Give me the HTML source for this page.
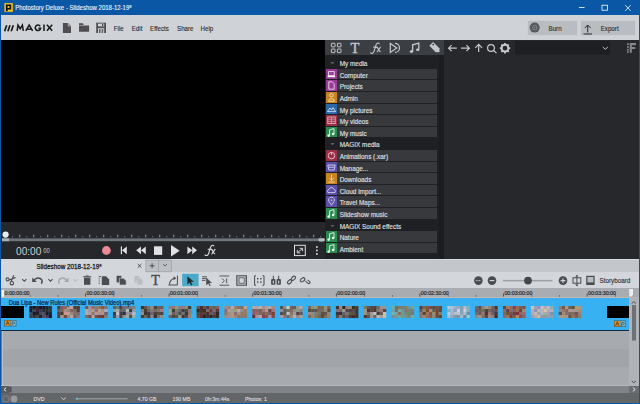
<!DOCTYPE html>
<html><head><meta charset="utf-8">
<style>
*{margin:0;padding:0;box-sizing:border-box}
html,body{width:640px;height:404px;overflow:hidden;background:#0957a5;font-family:"Liberation Sans",sans-serif}
.a{position:absolute}
svg{position:absolute;left:0;top:0}
text{font-family:"Liberation Sans",sans-serif}
.serif{font-family:"Liberation Serif",serif}
</style></head><body>
<div class="a" style="left:0px;top:0px;width:640px;height:15px;background:#0957a5;"></div>
<div class="a" style="left:1px;top:15px;width:638px;height:25px;background:#cfd3d8;"></div>
<div class="a" style="left:1px;top:40px;width:324px;height:182px;background:#000;"></div>
<div class="a" style="left:1px;top:222px;width:324px;height:37px;background:#25272b;"></div>
<div class="a" style="left:325px;top:40px;width:119px;height:15.5px;background:#3b3e43;"></div>
<div class="a" style="left:325px;top:55px;width:118px;height:204px;background:#1e2023;"></div>
<div class="a" style="left:439px;top:55px;width:5px;height:204px;background:#1b1c1f;"></div>
<div class="a" style="left:444px;top:40px;width:195px;height:219px;background:#26282c;"></div>
<div class="a" style="left:1px;top:259px;width:638px;height:13px;background:#c3c6ca;"></div>
<div class="a" style="left:1px;top:259px;width:638px;height:1px;background:#d6d9dd;"></div>
<div class="a" style="left:1px;top:259px;width:145px;height:13px;background:#d3d6da;"></div>
<div class="a" style="left:1px;top:272px;width:638px;height:16px;background:#d3d6da;"></div>
<div class="a" style="left:1px;top:288px;width:628px;height:9px;background:#a9acb0;"></div>
<div class="a" style="left:1px;top:297px;width:628px;height:1px;background:#c9b9ad;"></div>
<div class="a" style="left:1px;top:298px;width:628px;height:32px;background:#37b1f2;"></div>
<div class="a" style="left:1px;top:330px;width:628px;height:1px;background:#0d2a3a;"></div>
<div class="a" style="left:1px;top:331px;width:628px;height:55px;background:#a7aaae;"></div>
<div class="a" style="left:1px;top:349px;width:628px;height:18px;background:#a1a4a8;"></div>
<div class="a" style="left:629px;top:288px;width:10px;height:98px;background:#a9acb0;"></div>
<div class="a" style="left:1px;top:331px;width:1px;height:55px;background:#707a86;"></div>
<div class="a" style="left:2px;top:331px;width:1px;height:55px;background:#bec1c5;"></div>
<div class="a" style="left:629px;top:297px;width:10px;height:89px;background:#b0b3b7;"></div>
<div class="a" style="left:1px;top:386px;width:638px;height:7px;background:#8a8d91;"></div>
<div class="a" style="left:1px;top:393px;width:638px;height:10px;background:#636669;"></div>
<div class="a" style="left:326px;top:69px;width:11px;height:10px;background:#9a3c96;"></div>
<div class="a" style="left:337px;top:69px;width:100px;height:10px;background:#37393d;"></div>
<div class="a" style="left:326px;top:80px;width:11px;height:11px;background:#9a3c96;"></div>
<div class="a" style="left:337px;top:80px;width:100px;height:11px;background:#37393d;"></div>
<div class="a" style="left:326px;top:92px;width:11px;height:11px;background:#c88420;"></div>
<div class="a" style="left:337px;top:92px;width:100px;height:11px;background:#37393d;"></div>
<div class="a" style="left:326px;top:104px;width:11px;height:10px;background:#2c68a8;"></div>
<div class="a" style="left:337px;top:104px;width:100px;height:10px;background:#37393d;"></div>
<div class="a" style="left:326px;top:115px;width:11px;height:11px;background:#9a3048;"></div>
<div class="a" style="left:337px;top:115px;width:100px;height:11px;background:#37393d;"></div>
<div class="a" style="left:326px;top:127px;width:11px;height:10px;background:#2c8c50;"></div>
<div class="a" style="left:337px;top:127px;width:100px;height:10px;background:#37393d;"></div>
<div class="a" style="left:326px;top:150px;width:11px;height:11px;background:#9a3048;"></div>
<div class="a" style="left:337px;top:150px;width:100px;height:11px;background:#37393d;"></div>
<div class="a" style="left:326px;top:162px;width:11px;height:10px;background:#5a50a8;"></div>
<div class="a" style="left:337px;top:162px;width:100px;height:10px;background:#37393d;"></div>
<div class="a" style="left:326px;top:173px;width:11px;height:11px;background:#c88420;"></div>
<div class="a" style="left:337px;top:173px;width:100px;height:11px;background:#37393d;"></div>
<div class="a" style="left:326px;top:185px;width:11px;height:10px;background:#5a50a8;"></div>
<div class="a" style="left:337px;top:185px;width:100px;height:10px;background:#37393d;"></div>
<div class="a" style="left:326px;top:196px;width:11px;height:11px;background:#5a50a8;"></div>
<div class="a" style="left:337px;top:196px;width:100px;height:11px;background:#37393d;"></div>
<div class="a" style="left:326px;top:208px;width:11px;height:11px;background:#2c8c50;"></div>
<div class="a" style="left:337px;top:208px;width:100px;height:11px;background:#37393d;"></div>
<div class="a" style="left:326px;top:231px;width:11px;height:11px;background:#2c8c50;"></div>
<div class="a" style="left:337px;top:231px;width:100px;height:11px;background:#37393d;"></div>
<div class="a" style="left:326px;top:243px;width:11px;height:10px;background:#2c8c50;"></div>
<div class="a" style="left:337px;top:243px;width:100px;height:10px;background:#37393d;"></div>
<div class="a" style="left:1.25px;top:306px;width:22.5px;height:12px;background:#000;"></div>
<div class="a" style="left:607px;top:306px;width:21.5px;height:12px;background:#000;"></div>
<svg width="640" height="404" viewBox="0 0 640 404">
<g><rect x="29.40" y="306" width="3.26" height="3.05" fill="#181c2c"/><rect x="32.61" y="306" width="3.26" height="3.05" fill="#251323"/><rect x="35.83" y="306" width="3.26" height="3.05" fill="#38272c"/><rect x="39.04" y="306" width="3.26" height="3.05" fill="#21121f"/><rect x="42.26" y="306" width="3.26" height="3.05" fill="#21112a"/><rect x="45.47" y="306" width="3.26" height="3.05" fill="#1b242c"/><rect x="48.69" y="306" width="3.26" height="3.05" fill="#29333d"/><rect x="29.40" y="309" width="3.26" height="3.05" fill="#1e142c"/><rect x="32.61" y="309" width="3.26" height="3.05" fill="#494346"/><rect x="35.83" y="309" width="3.26" height="3.05" fill="#362738"/><rect x="39.04" y="309" width="3.26" height="3.05" fill="#413650"/><rect x="42.26" y="309" width="3.26" height="3.05" fill="#2d2b2d"/><rect x="45.47" y="309" width="3.26" height="3.05" fill="#263029"/><rect x="48.69" y="309" width="3.26" height="3.05" fill="#3a353b"/><rect x="29.40" y="312" width="3.26" height="3.05" fill="#474249"/><rect x="32.61" y="312" width="3.26" height="3.05" fill="#1b151f"/><rect x="35.83" y="312" width="3.26" height="3.05" fill="#1d2027"/><rect x="39.04" y="312" width="3.26" height="3.05" fill="#4f4156"/><rect x="42.26" y="312" width="3.26" height="3.05" fill="#4e5059"/><rect x="45.47" y="312" width="3.26" height="3.05" fill="#1e1427"/><rect x="48.69" y="312" width="3.26" height="3.05" fill="#1b262f"/><rect x="29.40" y="315" width="3.26" height="3.05" fill="#443b47"/><rect x="32.61" y="315" width="3.26" height="3.05" fill="#3b302e"/><rect x="35.83" y="315" width="3.26" height="3.05" fill="#464442"/><rect x="39.04" y="315" width="3.26" height="3.05" fill="#1d242a"/><rect x="42.26" y="315" width="3.26" height="3.05" fill="#5a4a59"/><rect x="45.47" y="315" width="3.26" height="3.05" fill="#4d3952"/><rect x="48.69" y="315" width="3.26" height="3.05" fill="#271327"/><rect x="57.26" y="306" width="3.26" height="3.05" fill="#59342f"/><rect x="60.47" y="306" width="3.26" height="3.05" fill="#865954"/><rect x="63.69" y="306" width="3.26" height="3.05" fill="#8e6559"/><rect x="66.90" y="306" width="3.26" height="3.05" fill="#b9908d"/><rect x="70.12" y="306" width="3.26" height="3.05" fill="#c7a297"/><rect x="73.33" y="306" width="3.26" height="3.05" fill="#573a32"/><rect x="76.55" y="306" width="3.26" height="3.05" fill="#5d302b"/><rect x="57.26" y="309" width="3.26" height="3.05" fill="#6e5753"/><rect x="60.47" y="309" width="3.26" height="3.05" fill="#865e50"/><rect x="63.69" y="309" width="3.26" height="3.05" fill="#a98c85"/><rect x="66.90" y="309" width="3.26" height="3.05" fill="#988580"/><rect x="70.12" y="309" width="3.26" height="3.05" fill="#836352"/><rect x="73.33" y="309" width="3.26" height="3.05" fill="#8d625f"/><rect x="76.55" y="309" width="3.26" height="3.05" fill="#573f2e"/><rect x="57.26" y="312" width="3.26" height="3.05" fill="#693731"/><rect x="60.47" y="312" width="3.26" height="3.05" fill="#4d3a24"/><rect x="63.69" y="312" width="3.26" height="3.05" fill="#ca9791"/><rect x="66.90" y="312" width="3.26" height="3.05" fill="#c19a8a"/><rect x="70.12" y="312" width="3.26" height="3.05" fill="#9d8575"/><rect x="73.33" y="312" width="3.26" height="3.05" fill="#836f66"/><rect x="76.55" y="312" width="3.26" height="3.05" fill="#8a635d"/><rect x="57.26" y="315" width="3.26" height="3.05" fill="#5f3d3c"/><rect x="60.47" y="315" width="3.26" height="3.05" fill="#ae9981"/><rect x="63.69" y="315" width="3.26" height="3.05" fill="#714c3d"/><rect x="66.90" y="315" width="3.26" height="3.05" fill="#99897a"/><rect x="70.12" y="315" width="3.26" height="3.05" fill="#bca2a2"/><rect x="73.33" y="315" width="3.26" height="3.05" fill="#795f53"/><rect x="76.55" y="315" width="3.26" height="3.05" fill="#977173"/><rect x="85.12" y="306" width="3.26" height="3.05" fill="#7d5451"/><rect x="88.33" y="306" width="3.26" height="3.05" fill="#ab8e90"/><rect x="91.55" y="306" width="3.26" height="3.05" fill="#8e6c6c"/><rect x="94.76" y="306" width="3.26" height="3.05" fill="#927c6c"/><rect x="97.98" y="306" width="3.26" height="3.05" fill="#957160"/><rect x="101.19" y="306" width="3.26" height="3.05" fill="#7e5b4a"/><rect x="104.41" y="306" width="3.26" height="3.05" fill="#906d65"/><rect x="85.12" y="309" width="3.26" height="3.05" fill="#bba897"/><rect x="88.33" y="309" width="3.26" height="3.05" fill="#ab9293"/><rect x="91.55" y="309" width="3.26" height="3.05" fill="#ad9c8a"/><rect x="94.76" y="309" width="3.26" height="3.05" fill="#9d6f5f"/><rect x="97.98" y="309" width="3.26" height="3.05" fill="#b59d93"/><rect x="101.19" y="309" width="3.26" height="3.05" fill="#a68e86"/><rect x="104.41" y="309" width="3.26" height="3.05" fill="#b9a9af"/><rect x="85.12" y="312" width="3.26" height="3.05" fill="#c69fa6"/><rect x="88.33" y="312" width="3.26" height="3.05" fill="#ba9d8e"/><rect x="91.55" y="312" width="3.26" height="3.05" fill="#97726a"/><rect x="94.76" y="312" width="3.26" height="3.05" fill="#bd9297"/><rect x="97.98" y="312" width="3.26" height="3.05" fill="#a89687"/><rect x="101.19" y="312" width="3.26" height="3.05" fill="#b19292"/><rect x="104.41" y="312" width="3.26" height="3.05" fill="#865255"/><rect x="85.12" y="315" width="3.26" height="3.05" fill="#916554"/><rect x="88.33" y="315" width="3.26" height="3.05" fill="#744844"/><rect x="91.55" y="315" width="3.26" height="3.05" fill="#ba9e99"/><rect x="94.76" y="315" width="3.26" height="3.05" fill="#73524a"/><rect x="97.98" y="315" width="3.26" height="3.05" fill="#743b41"/><rect x="101.19" y="315" width="3.26" height="3.05" fill="#6a3b32"/><rect x="104.41" y="315" width="3.26" height="3.05" fill="#8f7a62"/><rect x="112.98" y="306" width="3.26" height="3.05" fill="#635e61"/><rect x="116.19" y="306" width="3.26" height="3.05" fill="#6e776b"/><rect x="119.41" y="306" width="3.26" height="3.05" fill="#504246"/><rect x="122.62" y="306" width="3.26" height="3.05" fill="#806a70"/><rect x="125.84" y="306" width="3.26" height="3.05" fill="#787076"/><rect x="129.05" y="306" width="3.26" height="3.05" fill="#78797f"/><rect x="132.27" y="306" width="3.26" height="3.05" fill="#827e79"/><rect x="112.98" y="309" width="3.26" height="3.05" fill="#949a94"/><rect x="116.19" y="309" width="3.26" height="3.05" fill="#a5aca8"/><rect x="119.41" y="309" width="3.26" height="3.05" fill="#675a62"/><rect x="122.62" y="309" width="3.26" height="3.05" fill="#696764"/><rect x="125.84" y="309" width="3.26" height="3.05" fill="#aebcb9"/><rect x="129.05" y="309" width="3.26" height="3.05" fill="#3c3f38"/><rect x="132.27" y="309" width="3.26" height="3.05" fill="#969ca4"/><rect x="112.98" y="312" width="3.26" height="3.05" fill="#423942"/><rect x="116.19" y="312" width="3.26" height="3.05" fill="#c4c1cb"/><rect x="119.41" y="312" width="3.26" height="3.05" fill="#4a3b45"/><rect x="122.62" y="312" width="3.26" height="3.05" fill="#372c2c"/><rect x="125.84" y="312" width="3.26" height="3.05" fill="#98939e"/><rect x="129.05" y="312" width="3.26" height="3.05" fill="#907f84"/><rect x="132.27" y="312" width="3.26" height="3.05" fill="#beb9bf"/><rect x="112.98" y="315" width="3.26" height="3.05" fill="#4b494e"/><rect x="116.19" y="315" width="3.26" height="3.05" fill="#a19aa3"/><rect x="119.41" y="315" width="3.26" height="3.05" fill="#494442"/><rect x="122.62" y="315" width="3.26" height="3.05" fill="#8e918f"/><rect x="125.84" y="315" width="3.26" height="3.05" fill="#a0a6a0"/><rect x="129.05" y="315" width="3.26" height="3.05" fill="#4b5948"/><rect x="132.27" y="315" width="3.26" height="3.05" fill="#9daca6"/><rect x="140.84" y="306" width="3.26" height="3.05" fill="#393426"/><rect x="144.05" y="306" width="3.26" height="3.05" fill="#654f48"/><rect x="147.27" y="306" width="3.26" height="3.05" fill="#757063"/><rect x="150.48" y="306" width="3.26" height="3.05" fill="#9e8a7d"/><rect x="153.70" y="306" width="3.26" height="3.05" fill="#4a4539"/><rect x="156.91" y="306" width="3.26" height="3.05" fill="#705f61"/><rect x="160.13" y="306" width="3.26" height="3.05" fill="#6b5b5b"/><rect x="140.84" y="309" width="3.26" height="3.05" fill="#91756f"/><rect x="144.05" y="309" width="3.26" height="3.05" fill="#46372c"/><rect x="147.27" y="309" width="3.26" height="3.05" fill="#6f6354"/><rect x="150.48" y="309" width="3.26" height="3.05" fill="#8c716f"/><rect x="153.70" y="309" width="3.26" height="3.05" fill="#77685e"/><rect x="156.91" y="309" width="3.26" height="3.05" fill="#837169"/><rect x="160.13" y="309" width="3.26" height="3.05" fill="#a07b7e"/><rect x="140.84" y="312" width="3.26" height="3.05" fill="#a08c81"/><rect x="144.05" y="312" width="3.26" height="3.05" fill="#3e332b"/><rect x="147.27" y="312" width="3.26" height="3.05" fill="#42362f"/><rect x="150.48" y="312" width="3.26" height="3.05" fill="#7b5f68"/><rect x="153.70" y="312" width="3.26" height="3.05" fill="#4a3f30"/><rect x="156.91" y="312" width="3.26" height="3.05" fill="#554b42"/><rect x="160.13" y="312" width="3.26" height="3.05" fill="#523e41"/><rect x="140.84" y="315" width="3.26" height="3.05" fill="#4c3d32"/><rect x="144.05" y="315" width="3.26" height="3.05" fill="#736454"/><rect x="147.27" y="315" width="3.26" height="3.05" fill="#493a3f"/><rect x="150.48" y="315" width="3.26" height="3.05" fill="#8f8182"/><rect x="153.70" y="315" width="3.26" height="3.05" fill="#362f2f"/><rect x="156.91" y="315" width="3.26" height="3.05" fill="#77736d"/><rect x="160.13" y="315" width="3.26" height="3.05" fill="#938c80"/><rect x="168.70" y="306" width="3.26" height="3.05" fill="#957c74"/><rect x="171.91" y="306" width="3.26" height="3.05" fill="#957868"/><rect x="175.13" y="306" width="3.26" height="3.05" fill="#9c927e"/><rect x="178.34" y="306" width="3.26" height="3.05" fill="#927978"/><rect x="181.56" y="306" width="3.26" height="3.05" fill="#96777c"/><rect x="184.77" y="306" width="3.26" height="3.05" fill="#9d8370"/><rect x="187.99" y="306" width="3.26" height="3.05" fill="#3a4231"/><rect x="168.70" y="309" width="3.26" height="3.05" fill="#a79a8e"/><rect x="171.91" y="309" width="3.26" height="3.05" fill="#394439"/><rect x="175.13" y="309" width="3.26" height="3.05" fill="#8c7863"/><rect x="178.34" y="309" width="3.26" height="3.05" fill="#66695f"/><rect x="181.56" y="309" width="3.26" height="3.05" fill="#4d373b"/><rect x="184.77" y="309" width="3.26" height="3.05" fill="#504d42"/><rect x="187.99" y="309" width="3.26" height="3.05" fill="#887c7c"/><rect x="168.70" y="312" width="3.26" height="3.05" fill="#ab9a81"/><rect x="171.91" y="312" width="3.26" height="3.05" fill="#705d63"/><rect x="175.13" y="312" width="3.26" height="3.05" fill="#7d6d72"/><rect x="178.34" y="312" width="3.26" height="3.05" fill="#4b4e3a"/><rect x="181.56" y="312" width="3.26" height="3.05" fill="#7a6a6d"/><rect x="184.77" y="312" width="3.26" height="3.05" fill="#42342f"/><rect x="187.99" y="312" width="3.26" height="3.05" fill="#857f6c"/><rect x="168.70" y="315" width="3.26" height="3.05" fill="#735d60"/><rect x="171.91" y="315" width="3.26" height="3.05" fill="#4b4e36"/><rect x="175.13" y="315" width="3.26" height="3.05" fill="#54584d"/><rect x="178.34" y="315" width="3.26" height="3.05" fill="#aa9586"/><rect x="181.56" y="315" width="3.26" height="3.05" fill="#3d373a"/><rect x="184.77" y="315" width="3.26" height="3.05" fill="#5a4a4f"/><rect x="187.99" y="315" width="3.26" height="3.05" fill="#9c8673"/><rect x="196.56" y="306" width="3.26" height="3.05" fill="#6e564e"/><rect x="199.77" y="306" width="3.26" height="3.05" fill="#492c37"/><rect x="202.99" y="306" width="3.26" height="3.05" fill="#714e41"/><rect x="206.20" y="306" width="3.26" height="3.05" fill="#52382d"/><rect x="209.42" y="306" width="3.26" height="3.05" fill="#775d52"/><rect x="212.63" y="306" width="3.26" height="3.05" fill="#7a5848"/><rect x="215.85" y="306" width="3.26" height="3.05" fill="#876058"/><rect x="196.56" y="309" width="3.26" height="3.05" fill="#322818"/><rect x="199.77" y="309" width="3.26" height="3.05" fill="#4d3127"/><rect x="202.99" y="309" width="3.26" height="3.05" fill="#372b34"/><rect x="206.20" y="309" width="3.26" height="3.05" fill="#89635c"/><rect x="209.42" y="309" width="3.26" height="3.05" fill="#57413e"/><rect x="212.63" y="309" width="3.26" height="3.05" fill="#90625d"/><rect x="215.85" y="309" width="3.26" height="3.05" fill="#573a40"/><rect x="196.56" y="312" width="3.26" height="3.05" fill="#4e4535"/><rect x="199.77" y="312" width="3.26" height="3.05" fill="#5f3834"/><rect x="202.99" y="312" width="3.26" height="3.05" fill="#573c37"/><rect x="206.20" y="312" width="3.26" height="3.05" fill="#48282a"/><rect x="209.42" y="312" width="3.26" height="3.05" fill="#6b524c"/><rect x="212.63" y="312" width="3.26" height="3.05" fill="#664950"/><rect x="215.85" y="312" width="3.26" height="3.05" fill="#2f2827"/><rect x="196.56" y="315" width="3.26" height="3.05" fill="#644442"/><rect x="199.77" y="315" width="3.26" height="3.05" fill="#583532"/><rect x="202.99" y="315" width="3.26" height="3.05" fill="#302718"/><rect x="206.20" y="315" width="3.26" height="3.05" fill="#462e35"/><rect x="209.42" y="315" width="3.26" height="3.05" fill="#2d2826"/><rect x="212.63" y="315" width="3.26" height="3.05" fill="#563436"/><rect x="215.85" y="315" width="3.26" height="3.05" fill="#363027"/><rect x="224.42" y="306" width="3.26" height="3.05" fill="#a78985"/><rect x="227.63" y="306" width="3.26" height="3.05" fill="#9f847a"/><rect x="230.85" y="306" width="3.26" height="3.05" fill="#baa8a0"/><rect x="234.06" y="306" width="3.26" height="3.05" fill="#9d7c70"/><rect x="237.28" y="306" width="3.26" height="3.05" fill="#8b705d"/><rect x="240.49" y="306" width="3.26" height="3.05" fill="#876c5a"/><rect x="243.71" y="306" width="3.26" height="3.05" fill="#baa599"/><rect x="224.42" y="309" width="3.26" height="3.05" fill="#946a6b"/><rect x="227.63" y="309" width="3.26" height="3.05" fill="#b99b9a"/><rect x="230.85" y="309" width="3.26" height="3.05" fill="#a7988b"/><rect x="234.06" y="309" width="3.26" height="3.05" fill="#9c997e"/><rect x="237.28" y="309" width="3.26" height="3.05" fill="#c6a9a1"/><rect x="240.49" y="309" width="3.26" height="3.05" fill="#a28d7c"/><rect x="243.71" y="309" width="3.26" height="3.05" fill="#9e786e"/><rect x="224.42" y="312" width="3.26" height="3.05" fill="#9d6f5f"/><rect x="227.63" y="312" width="3.26" height="3.05" fill="#a88b7d"/><rect x="230.85" y="312" width="3.26" height="3.05" fill="#a7998a"/><rect x="234.06" y="312" width="3.26" height="3.05" fill="#8f6d6a"/><rect x="237.28" y="312" width="3.26" height="3.05" fill="#ac907f"/><rect x="240.49" y="312" width="3.26" height="3.05" fill="#9a775c"/><rect x="243.71" y="312" width="3.26" height="3.05" fill="#967965"/><rect x="224.42" y="315" width="3.26" height="3.05" fill="#a18c7a"/><rect x="227.63" y="315" width="3.26" height="3.05" fill="#a88d86"/><rect x="230.85" y="315" width="3.26" height="3.05" fill="#b59387"/><rect x="234.06" y="315" width="3.26" height="3.05" fill="#9d8976"/><rect x="237.28" y="315" width="3.26" height="3.05" fill="#8f7566"/><rect x="240.49" y="315" width="3.26" height="3.05" fill="#947367"/><rect x="243.71" y="315" width="3.26" height="3.05" fill="#8c7866"/><rect x="252.28" y="306" width="3.26" height="3.05" fill="#b3ad9e"/><rect x="255.49" y="306" width="3.26" height="3.05" fill="#b4a29c"/><rect x="258.71" y="306" width="3.26" height="3.05" fill="#bcafa3"/><rect x="261.92" y="306" width="3.26" height="3.05" fill="#a68e90"/><rect x="265.14" y="306" width="3.26" height="3.05" fill="#bb9c9b"/><rect x="268.35" y="306" width="3.26" height="3.05" fill="#bea3a2"/><rect x="271.57" y="306" width="3.26" height="3.05" fill="#ac897c"/><rect x="252.28" y="309" width="3.26" height="3.05" fill="#8b5c5b"/><rect x="255.49" y="309" width="3.26" height="3.05" fill="#8d6163"/><rect x="258.71" y="309" width="3.26" height="3.05" fill="#875a50"/><rect x="261.92" y="309" width="3.26" height="3.05" fill="#9a7b7a"/><rect x="265.14" y="309" width="3.26" height="3.05" fill="#af968b"/><rect x="268.35" y="309" width="3.26" height="3.05" fill="#77373c"/><rect x="271.57" y="309" width="3.26" height="3.05" fill="#a07377"/><rect x="252.28" y="312" width="3.26" height="3.05" fill="#92576b"/><rect x="255.49" y="312" width="3.26" height="3.05" fill="#9b695e"/><rect x="258.71" y="312" width="3.26" height="3.05" fill="#925b5a"/><rect x="261.92" y="312" width="3.26" height="3.05" fill="#7c5d54"/><rect x="265.14" y="312" width="3.26" height="3.05" fill="#8d6a58"/><rect x="268.35" y="312" width="3.26" height="3.05" fill="#845354"/><rect x="271.57" y="312" width="3.26" height="3.05" fill="#794230"/><rect x="252.28" y="315" width="3.26" height="3.05" fill="#6d313d"/><rect x="255.49" y="315" width="3.26" height="3.05" fill="#af8e8a"/><rect x="258.71" y="315" width="3.26" height="3.05" fill="#c29faa"/><rect x="261.92" y="315" width="3.26" height="3.05" fill="#7c4554"/><rect x="265.14" y="315" width="3.26" height="3.05" fill="#825653"/><rect x="268.35" y="315" width="3.26" height="3.05" fill="#ba8d9b"/><rect x="271.57" y="315" width="3.26" height="3.05" fill="#7a4a50"/><rect x="280.14" y="306" width="3.26" height="3.05" fill="#535251"/><rect x="283.35" y="306" width="3.26" height="3.05" fill="#918d7e"/><rect x="286.57" y="306" width="3.26" height="3.05" fill="#c9ccb3"/><rect x="289.78" y="306" width="3.26" height="3.05" fill="#706460"/><rect x="293.00" y="306" width="3.26" height="3.05" fill="#635e5c"/><rect x="296.21" y="306" width="3.26" height="3.05" fill="#9c9b87"/><rect x="299.43" y="306" width="3.26" height="3.05" fill="#b1a8a0"/><rect x="280.14" y="309" width="3.26" height="3.05" fill="#9a8b86"/><rect x="283.35" y="309" width="3.26" height="3.05" fill="#695958"/><rect x="286.57" y="309" width="3.26" height="3.05" fill="#706b5b"/><rect x="289.78" y="309" width="3.26" height="3.05" fill="#7e6d67"/><rect x="293.00" y="309" width="3.26" height="3.05" fill="#8e9079"/><rect x="296.21" y="309" width="3.26" height="3.05" fill="#9a9188"/><rect x="299.43" y="309" width="3.26" height="3.05" fill="#8a867d"/><rect x="280.14" y="312" width="3.26" height="3.05" fill="#584740"/><rect x="283.35" y="312" width="3.26" height="3.05" fill="#635345"/><rect x="286.57" y="312" width="3.26" height="3.05" fill="#c5c2af"/><rect x="289.78" y="312" width="3.26" height="3.05" fill="#887472"/><rect x="293.00" y="312" width="3.26" height="3.05" fill="#aa978c"/><rect x="296.21" y="312" width="3.26" height="3.05" fill="#59443e"/><rect x="299.43" y="312" width="3.26" height="3.05" fill="#6b5664"/><rect x="280.14" y="315" width="3.26" height="3.05" fill="#a9989c"/><rect x="283.35" y="315" width="3.26" height="3.05" fill="#87747d"/><rect x="286.57" y="315" width="3.26" height="3.05" fill="#76646e"/><rect x="289.78" y="315" width="3.26" height="3.05" fill="#8e8e7e"/><rect x="293.00" y="315" width="3.26" height="3.05" fill="#bba5ae"/><rect x="296.21" y="315" width="3.26" height="3.05" fill="#9f8486"/><rect x="299.43" y="315" width="3.26" height="3.05" fill="#ab9d96"/><rect x="308.00" y="306" width="3.26" height="3.05" fill="#6e665f"/><rect x="311.21" y="306" width="3.26" height="3.05" fill="#9f8f72"/><rect x="314.43" y="306" width="3.26" height="3.05" fill="#9b9476"/><rect x="317.64" y="306" width="3.26" height="3.05" fill="#77614b"/><rect x="320.86" y="306" width="3.26" height="3.05" fill="#736b51"/><rect x="324.07" y="306" width="3.26" height="3.05" fill="#998f78"/><rect x="327.29" y="306" width="3.26" height="3.05" fill="#756450"/><rect x="308.00" y="309" width="3.26" height="3.05" fill="#54543c"/><rect x="311.21" y="309" width="3.26" height="3.05" fill="#664e43"/><rect x="314.43" y="309" width="3.26" height="3.05" fill="#64523e"/><rect x="317.64" y="309" width="3.26" height="3.05" fill="#776861"/><rect x="320.86" y="309" width="3.26" height="3.05" fill="#796c57"/><rect x="324.07" y="309" width="3.26" height="3.05" fill="#8f8d78"/><rect x="327.29" y="309" width="3.26" height="3.05" fill="#644c32"/><rect x="308.00" y="312" width="3.26" height="3.05" fill="#a68887"/><rect x="311.21" y="312" width="3.26" height="3.05" fill="#918d76"/><rect x="314.43" y="312" width="3.26" height="3.05" fill="#827b61"/><rect x="317.64" y="312" width="3.26" height="3.05" fill="#7a7569"/><rect x="320.86" y="312" width="3.26" height="3.05" fill="#634b3c"/><rect x="324.07" y="312" width="3.26" height="3.05" fill="#655050"/><rect x="327.29" y="312" width="3.26" height="3.05" fill="#8f8871"/><rect x="308.00" y="315" width="3.26" height="3.05" fill="#796c5f"/><rect x="311.21" y="315" width="3.26" height="3.05" fill="#9d8672"/><rect x="314.43" y="315" width="3.26" height="3.05" fill="#877665"/><rect x="317.64" y="315" width="3.26" height="3.05" fill="#7d644f"/><rect x="320.86" y="315" width="3.26" height="3.05" fill="#5d4c35"/><rect x="324.07" y="315" width="3.26" height="3.05" fill="#826d54"/><rect x="327.29" y="315" width="3.26" height="3.05" fill="#987f6e"/><rect x="335.86" y="306" width="3.26" height="3.05" fill="#433326"/><rect x="339.07" y="306" width="3.26" height="3.05" fill="#9c8d77"/><rect x="342.29" y="306" width="3.26" height="3.05" fill="#342428"/><rect x="345.50" y="306" width="3.26" height="3.05" fill="#997c74"/><rect x="348.72" y="306" width="3.26" height="3.05" fill="#928a74"/><rect x="351.93" y="306" width="3.26" height="3.05" fill="#323521"/><rect x="355.15" y="306" width="3.26" height="3.05" fill="#4d3931"/><rect x="335.86" y="309" width="3.26" height="3.05" fill="#847073"/><rect x="339.07" y="309" width="3.26" height="3.05" fill="#7c6a69"/><rect x="342.29" y="309" width="3.26" height="3.05" fill="#a09786"/><rect x="345.50" y="309" width="3.26" height="3.05" fill="#553e45"/><rect x="348.72" y="309" width="3.26" height="3.05" fill="#57403e"/><rect x="351.93" y="309" width="3.26" height="3.05" fill="#5b4c4e"/><rect x="355.15" y="309" width="3.26" height="3.05" fill="#423634"/><rect x="335.86" y="312" width="3.26" height="3.05" fill="#433039"/><rect x="339.07" y="312" width="3.26" height="3.05" fill="#3b302f"/><rect x="342.29" y="312" width="3.26" height="3.05" fill="#6b6165"/><rect x="345.50" y="312" width="3.26" height="3.05" fill="#827269"/><rect x="348.72" y="312" width="3.26" height="3.05" fill="#615946"/><rect x="351.93" y="312" width="3.26" height="3.05" fill="#565347"/><rect x="355.15" y="312" width="3.26" height="3.05" fill="#3d373a"/><rect x="335.86" y="315" width="3.26" height="3.05" fill="#5a4a3d"/><rect x="339.07" y="315" width="3.26" height="3.05" fill="#847b72"/><rect x="342.29" y="315" width="3.26" height="3.05" fill="#5f4945"/><rect x="345.50" y="315" width="3.26" height="3.05" fill="#685c62"/><rect x="348.72" y="315" width="3.26" height="3.05" fill="#573530"/><rect x="351.93" y="315" width="3.26" height="3.05" fill="#422d27"/><rect x="355.15" y="315" width="3.26" height="3.05" fill="#3e3628"/><rect x="363.72" y="306" width="3.26" height="3.05" fill="#7a765f"/><rect x="366.93" y="306" width="3.26" height="3.05" fill="#6a5743"/><rect x="370.15" y="306" width="3.26" height="3.05" fill="#554343"/><rect x="373.36" y="306" width="3.26" height="3.05" fill="#5d3d38"/><rect x="376.58" y="306" width="3.26" height="3.05" fill="#78635a"/><rect x="379.79" y="306" width="3.26" height="3.05" fill="#a08f8e"/><rect x="383.01" y="306" width="3.26" height="3.05" fill="#9d978b"/><rect x="363.72" y="309" width="3.26" height="3.05" fill="#a19587"/><rect x="366.93" y="309" width="3.26" height="3.05" fill="#533234"/><rect x="370.15" y="309" width="3.26" height="3.05" fill="#59473f"/><rect x="373.36" y="309" width="3.26" height="3.05" fill="#51362a"/><rect x="376.58" y="309" width="3.26" height="3.05" fill="#81776f"/><rect x="379.79" y="309" width="3.26" height="3.05" fill="#917e7b"/><rect x="383.01" y="309" width="3.26" height="3.05" fill="#5c4643"/><rect x="363.72" y="312" width="3.26" height="3.05" fill="#9c9278"/><rect x="366.93" y="312" width="3.26" height="3.05" fill="#7a6d58"/><rect x="370.15" y="312" width="3.26" height="3.05" fill="#a9968f"/><rect x="373.36" y="312" width="3.26" height="3.05" fill="#c4babf"/><rect x="376.58" y="312" width="3.26" height="3.05" fill="#4c3a29"/><rect x="379.79" y="312" width="3.26" height="3.05" fill="#705d57"/><rect x="383.01" y="312" width="3.26" height="3.05" fill="#c2c4ad"/><rect x="363.72" y="315" width="3.26" height="3.05" fill="#583833"/><rect x="366.93" y="315" width="3.26" height="3.05" fill="#65564b"/><rect x="370.15" y="315" width="3.26" height="3.05" fill="#a69795"/><rect x="373.36" y="315" width="3.26" height="3.05" fill="#6e6563"/><rect x="376.58" y="315" width="3.26" height="3.05" fill="#c3b8b0"/><rect x="379.79" y="315" width="3.26" height="3.05" fill="#a89ea2"/><rect x="383.01" y="315" width="3.26" height="3.05" fill="#bec0ae"/><rect x="391.58" y="306" width="3.26" height="3.05" fill="#76aea3"/><rect x="394.79" y="306" width="3.26" height="3.05" fill="#79715f"/><rect x="398.01" y="306" width="3.26" height="3.05" fill="#787c5f"/><rect x="401.22" y="306" width="3.26" height="3.05" fill="#747e71"/><rect x="404.44" y="306" width="3.26" height="3.05" fill="#887e5c"/><rect x="407.65" y="306" width="3.26" height="3.05" fill="#6c979c"/><rect x="410.87" y="306" width="3.26" height="3.05" fill="#70aa91"/><rect x="391.58" y="309" width="3.26" height="3.05" fill="#74a49e"/><rect x="394.79" y="309" width="3.26" height="3.05" fill="#757668"/><rect x="398.01" y="309" width="3.26" height="3.05" fill="#7ba7b0"/><rect x="401.22" y="309" width="3.26" height="3.05" fill="#7b9489"/><rect x="404.44" y="309" width="3.26" height="3.05" fill="#887468"/><rect x="407.65" y="309" width="3.26" height="3.05" fill="#7d846f"/><rect x="410.87" y="309" width="3.26" height="3.05" fill="#797f7c"/><rect x="391.58" y="312" width="3.26" height="3.05" fill="#7bb3a8"/><rect x="394.79" y="312" width="3.26" height="3.05" fill="#7c9fa2"/><rect x="398.01" y="312" width="3.26" height="3.05" fill="#856d65"/><rect x="401.22" y="312" width="3.26" height="3.05" fill="#6f978c"/><rect x="404.44" y="312" width="3.26" height="3.05" fill="#748870"/><rect x="407.65" y="312" width="3.26" height="3.05" fill="#73836a"/><rect x="410.87" y="312" width="3.26" height="3.05" fill="#727a78"/><rect x="391.58" y="315" width="3.26" height="3.05" fill="#7d8c8a"/><rect x="394.79" y="315" width="3.26" height="3.05" fill="#7c9695"/><rect x="398.01" y="315" width="3.26" height="3.05" fill="#70aba3"/><rect x="401.22" y="315" width="3.26" height="3.05" fill="#719c7e"/><rect x="404.44" y="315" width="3.26" height="3.05" fill="#7f8a8f"/><rect x="407.65" y="315" width="3.26" height="3.05" fill="#73897b"/><rect x="410.87" y="315" width="3.26" height="3.05" fill="#6aaeac"/><rect x="419.44" y="306" width="3.26" height="3.05" fill="#5c3f2e"/><rect x="422.65" y="306" width="3.26" height="3.05" fill="#846345"/><rect x="425.87" y="306" width="3.26" height="3.05" fill="#83564b"/><rect x="429.08" y="306" width="3.26" height="3.05" fill="#705040"/><rect x="432.30" y="306" width="3.26" height="3.05" fill="#684036"/><rect x="435.51" y="306" width="3.26" height="3.05" fill="#6d5038"/><rect x="438.73" y="306" width="3.26" height="3.05" fill="#6e4841"/><rect x="419.44" y="309" width="3.26" height="3.05" fill="#6f5347"/><rect x="422.65" y="309" width="3.26" height="3.05" fill="#9b8463"/><rect x="425.87" y="309" width="3.26" height="3.05" fill="#7a4b39"/><rect x="429.08" y="309" width="3.26" height="3.05" fill="#a48d73"/><rect x="432.30" y="309" width="3.26" height="3.05" fill="#745741"/><rect x="435.51" y="309" width="3.26" height="3.05" fill="#6a4c38"/><rect x="438.73" y="309" width="3.26" height="3.05" fill="#66463a"/><rect x="419.44" y="312" width="3.26" height="3.05" fill="#96715a"/><rect x="422.65" y="312" width="3.26" height="3.05" fill="#5f4431"/><rect x="425.87" y="312" width="3.26" height="3.05" fill="#a2755d"/><rect x="429.08" y="312" width="3.26" height="3.05" fill="#7e584e"/><rect x="432.30" y="312" width="3.26" height="3.05" fill="#a48964"/><rect x="435.51" y="312" width="3.26" height="3.05" fill="#714a2d"/><rect x="438.73" y="312" width="3.26" height="3.05" fill="#967b66"/><rect x="419.44" y="315" width="3.26" height="3.05" fill="#977169"/><rect x="422.65" y="315" width="3.26" height="3.05" fill="#a78564"/><rect x="425.87" y="315" width="3.26" height="3.05" fill="#99685e"/><rect x="429.08" y="315" width="3.26" height="3.05" fill="#7b6743"/><rect x="432.30" y="315" width="3.26" height="3.05" fill="#9b8072"/><rect x="435.51" y="315" width="3.26" height="3.05" fill="#6c4e3c"/><rect x="438.73" y="315" width="3.26" height="3.05" fill="#63462b"/><rect x="447.30" y="306" width="3.26" height="3.05" fill="#c4c4da"/><rect x="450.51" y="306" width="3.26" height="3.05" fill="#b7c1d3"/><rect x="453.73" y="306" width="3.26" height="3.05" fill="#9eb1ca"/><rect x="456.94" y="306" width="3.26" height="3.05" fill="#98abc0"/><rect x="460.16" y="306" width="3.26" height="3.05" fill="#88a3a6"/><rect x="463.37" y="306" width="3.26" height="3.05" fill="#adc2c9"/><rect x="466.59" y="306" width="3.26" height="3.05" fill="#9aa7b7"/><rect x="447.30" y="309" width="3.26" height="3.05" fill="#8eb3bc"/><rect x="450.51" y="309" width="3.26" height="3.05" fill="#a9bacb"/><rect x="453.73" y="309" width="3.26" height="3.05" fill="#8ba3bf"/><rect x="456.94" y="309" width="3.26" height="3.05" fill="#d0d1e1"/><rect x="460.16" y="309" width="3.26" height="3.05" fill="#86a0b6"/><rect x="463.37" y="309" width="3.26" height="3.05" fill="#cecfdd"/><rect x="466.59" y="309" width="3.26" height="3.05" fill="#96a9b7"/><rect x="447.30" y="312" width="3.26" height="3.05" fill="#c6c4d8"/><rect x="450.51" y="312" width="3.26" height="3.05" fill="#a9b6cb"/><rect x="453.73" y="312" width="3.26" height="3.05" fill="#b1c2ca"/><rect x="456.94" y="312" width="3.26" height="3.05" fill="#c1bfd5"/><rect x="460.16" y="312" width="3.26" height="3.05" fill="#8ea5bb"/><rect x="463.37" y="312" width="3.26" height="3.05" fill="#b3bad1"/><rect x="466.59" y="312" width="3.26" height="3.05" fill="#6e8fa2"/><rect x="447.30" y="315" width="3.26" height="3.05" fill="#adc2cf"/><rect x="450.51" y="315" width="3.26" height="3.05" fill="#a2a5be"/><rect x="453.73" y="315" width="3.26" height="3.05" fill="#7d9ba4"/><rect x="456.94" y="315" width="3.26" height="3.05" fill="#8094a4"/><rect x="460.16" y="315" width="3.26" height="3.05" fill="#a2becb"/><rect x="463.37" y="315" width="3.26" height="3.05" fill="#678b9d"/><rect x="466.59" y="315" width="3.26" height="3.05" fill="#abc6c3"/><rect x="475.16" y="306" width="3.26" height="3.05" fill="#7c6362"/><rect x="478.37" y="306" width="3.26" height="3.05" fill="#604c4b"/><rect x="481.59" y="306" width="3.26" height="3.05" fill="#90877b"/><rect x="484.80" y="306" width="3.26" height="3.05" fill="#a1998e"/><rect x="488.02" y="306" width="3.26" height="3.05" fill="#968873"/><rect x="491.23" y="306" width="3.26" height="3.05" fill="#7e5c61"/><rect x="494.45" y="306" width="3.26" height="3.05" fill="#51362d"/><rect x="475.16" y="309" width="3.26" height="3.05" fill="#7a545a"/><rect x="478.37" y="309" width="3.26" height="3.05" fill="#6d6251"/><rect x="481.59" y="309" width="3.26" height="3.05" fill="#7d694d"/><rect x="484.80" y="309" width="3.26" height="3.05" fill="#52413f"/><rect x="488.02" y="309" width="3.26" height="3.05" fill="#756458"/><rect x="491.23" y="309" width="3.26" height="3.05" fill="#66545a"/><rect x="494.45" y="309" width="3.26" height="3.05" fill="#724840"/><rect x="475.16" y="312" width="3.26" height="3.05" fill="#826567"/><rect x="478.37" y="312" width="3.26" height="3.05" fill="#6f5652"/><rect x="481.59" y="312" width="3.26" height="3.05" fill="#98716b"/><rect x="484.80" y="312" width="3.26" height="3.05" fill="#4c3636"/><rect x="488.02" y="312" width="3.26" height="3.05" fill="#9b7970"/><rect x="491.23" y="312" width="3.26" height="3.05" fill="#725758"/><rect x="494.45" y="312" width="3.26" height="3.05" fill="#493431"/><rect x="475.16" y="315" width="3.26" height="3.05" fill="#9b827c"/><rect x="478.37" y="315" width="3.26" height="3.05" fill="#b09380"/><rect x="481.59" y="315" width="3.26" height="3.05" fill="#807061"/><rect x="484.80" y="315" width="3.26" height="3.05" fill="#62474e"/><rect x="488.02" y="315" width="3.26" height="3.05" fill="#a18885"/><rect x="491.23" y="315" width="3.26" height="3.05" fill="#907e74"/><rect x="494.45" y="315" width="3.26" height="3.05" fill="#492e26"/><rect x="503.02" y="306" width="3.26" height="3.05" fill="#754127"/><rect x="506.23" y="306" width="3.26" height="3.05" fill="#aa7965"/><rect x="509.45" y="306" width="3.26" height="3.05" fill="#a06b4e"/><rect x="512.66" y="306" width="3.26" height="3.05" fill="#834643"/><rect x="515.88" y="306" width="3.26" height="3.05" fill="#9a6958"/><rect x="519.09" y="306" width="3.26" height="3.05" fill="#815d3e"/><rect x="522.31" y="306" width="3.26" height="3.05" fill="#7e4e4b"/><rect x="503.02" y="309" width="3.26" height="3.05" fill="#9c6560"/><rect x="506.23" y="309" width="3.26" height="3.05" fill="#663b38"/><rect x="509.45" y="309" width="3.26" height="3.05" fill="#8f6960"/><rect x="512.66" y="309" width="3.26" height="3.05" fill="#885e57"/><rect x="515.88" y="309" width="3.26" height="3.05" fill="#9e6c54"/><rect x="519.09" y="309" width="3.26" height="3.05" fill="#724138"/><rect x="522.31" y="309" width="3.26" height="3.05" fill="#ab8574"/><rect x="503.02" y="312" width="3.26" height="3.05" fill="#896756"/><rect x="506.23" y="312" width="3.26" height="3.05" fill="#734c2f"/><rect x="509.45" y="312" width="3.26" height="3.05" fill="#7f4c41"/><rect x="512.66" y="312" width="3.26" height="3.05" fill="#733d3f"/><rect x="515.88" y="312" width="3.26" height="3.05" fill="#783534"/><rect x="519.09" y="312" width="3.26" height="3.05" fill="#9a6260"/><rect x="522.31" y="312" width="3.26" height="3.05" fill="#9c6761"/><rect x="503.02" y="315" width="3.26" height="3.05" fill="#9c6755"/><rect x="506.23" y="315" width="3.26" height="3.05" fill="#a37162"/><rect x="509.45" y="315" width="3.26" height="3.05" fill="#7a4128"/><rect x="512.66" y="315" width="3.26" height="3.05" fill="#855941"/><rect x="515.88" y="315" width="3.26" height="3.05" fill="#b48666"/><rect x="519.09" y="315" width="3.26" height="3.05" fill="#894e46"/><rect x="522.31" y="315" width="3.26" height="3.05" fill="#95605c"/><rect x="530.88" y="306" width="3.26" height="3.05" fill="#c5c6b9"/><rect x="534.09" y="306" width="3.26" height="3.05" fill="#a4a2b4"/><rect x="537.31" y="306" width="3.26" height="3.05" fill="#9294b2"/><rect x="540.52" y="306" width="3.26" height="3.05" fill="#d4bdbf"/><rect x="543.74" y="306" width="3.26" height="3.05" fill="#acabba"/><rect x="546.95" y="306" width="3.26" height="3.05" fill="#c7b9b0"/><rect x="550.17" y="306" width="3.26" height="3.05" fill="#9aa8a7"/><rect x="530.88" y="309" width="3.26" height="3.05" fill="#bcabb3"/><rect x="534.09" y="309" width="3.26" height="3.05" fill="#9194af"/><rect x="537.31" y="309" width="3.26" height="3.05" fill="#beb9af"/><rect x="540.52" y="309" width="3.26" height="3.05" fill="#c5afb1"/><rect x="543.74" y="309" width="3.26" height="3.05" fill="#d2c2b7"/><rect x="546.95" y="309" width="3.26" height="3.05" fill="#acaeb2"/><rect x="550.17" y="309" width="3.26" height="3.05" fill="#b8b1b2"/><rect x="530.88" y="312" width="3.26" height="3.05" fill="#aeafab"/><rect x="534.09" y="312" width="3.26" height="3.05" fill="#cfb1b7"/><rect x="537.31" y="312" width="3.26" height="3.05" fill="#97aaac"/><rect x="540.52" y="312" width="3.26" height="3.05" fill="#b7b5ba"/><rect x="543.74" y="312" width="3.26" height="3.05" fill="#a2acad"/><rect x="546.95" y="312" width="3.26" height="3.05" fill="#a8a0a8"/><rect x="550.17" y="312" width="3.26" height="3.05" fill="#8292a5"/><rect x="530.88" y="315" width="3.26" height="3.05" fill="#9f9fab"/><rect x="534.09" y="315" width="3.26" height="3.05" fill="#b5b0a9"/><rect x="537.31" y="315" width="3.26" height="3.05" fill="#ccbbae"/><rect x="540.52" y="315" width="3.26" height="3.05" fill="#9b97a3"/><rect x="543.74" y="315" width="3.26" height="3.05" fill="#889da6"/><rect x="546.95" y="315" width="3.26" height="3.05" fill="#9a9fa4"/><rect x="550.17" y="315" width="3.26" height="3.05" fill="#919bae"/><rect x="558.74" y="306" width="3.26" height="3.05" fill="#91796a"/><rect x="561.95" y="306" width="3.26" height="3.05" fill="#6f5b4b"/><rect x="565.17" y="306" width="3.26" height="3.05" fill="#b49586"/><rect x="568.38" y="306" width="3.26" height="3.05" fill="#6f5e42"/><rect x="571.60" y="306" width="3.26" height="3.05" fill="#5c543d"/><rect x="574.81" y="306" width="3.26" height="3.05" fill="#b29b77"/><rect x="578.03" y="306" width="3.26" height="3.05" fill="#b79777"/><rect x="558.74" y="309" width="3.26" height="3.05" fill="#978572"/><rect x="561.95" y="309" width="3.26" height="3.05" fill="#9d736d"/><rect x="565.17" y="309" width="3.26" height="3.05" fill="#88675a"/><rect x="568.38" y="309" width="3.26" height="3.05" fill="#b3997e"/><rect x="571.60" y="309" width="3.26" height="3.05" fill="#b5938c"/><rect x="574.81" y="309" width="3.26" height="3.05" fill="#a89788"/><rect x="578.03" y="309" width="3.26" height="3.05" fill="#aa8d69"/><rect x="558.74" y="312" width="3.26" height="3.05" fill="#6b493e"/><rect x="561.95" y="312" width="3.26" height="3.05" fill="#9c8d78"/><rect x="565.17" y="312" width="3.26" height="3.05" fill="#936a62"/><rect x="568.38" y="312" width="3.26" height="3.05" fill="#7c684d"/><rect x="571.60" y="312" width="3.26" height="3.05" fill="#85665c"/><rect x="574.81" y="312" width="3.26" height="3.05" fill="#715551"/><rect x="578.03" y="312" width="3.26" height="3.05" fill="#9c7f6e"/><rect x="558.74" y="315" width="3.26" height="3.05" fill="#b0938d"/><rect x="561.95" y="315" width="3.26" height="3.05" fill="#a79978"/><rect x="565.17" y="315" width="3.26" height="3.05" fill="#b4908d"/><rect x="568.38" y="315" width="3.26" height="3.05" fill="#69513d"/><rect x="571.60" y="315" width="3.26" height="3.05" fill="#96755a"/><rect x="574.81" y="315" width="3.26" height="3.05" fill="#766258"/><rect x="578.03" y="315" width="3.26" height="3.05" fill="#8c7e60"/></g><rect x="4.4" y="3.1" width="8.4" height="8.8" fill="#f5c020"/><path d="M5.9 4.5h5.3v5h-3.5v1.8h-1.8z M7.6 6v2h1.9v-2z" fill="#111" fill-rule="evenodd"/><text x="15.2" y="10.3" font-size="6.66" fill="#eef3f8" stroke="#eef3f8" stroke-width="0.12" textLength="116.40" lengthAdjust="spacingAndGlyphs" >Photostory Deluxe - Slideshow 2018-12-19*</text>
<path d="M579 7.5h5.6" stroke="#fff" stroke-width="0.8"/><rect x="602" y="5.2" width="5.4" height="5" fill="none" stroke="#fff" stroke-width="0.8"/><path d="M625.2 5.2l5.4 5.6M630.6 5.2l-5.4 5.6" stroke="#fff" stroke-width="0.8"/><path d="M4.6 31.3l2.1-6.1M7.9 31.3l2.1-6.1M11.2 31.3l2.1-6.1" stroke="#1a1a1a" stroke-width="1.7"/><g stroke="#1a1a1a" stroke-width="1.55" fill="none" stroke-linejoin="miter" stroke-miterlimit="3"><path d="M17.1 30.9L18 25.1L20.2 28.7L22.4 25.1L23.3 30.9"/><path d="M25.8 30.9L29.2 25L32.6 30.9M27.6 29.3h3.2"/><path d="M40.2 26.2A2.7 2.75 0 1 0 40.6 28.3H38.4"/><path d="M44 24.6V30.9"/><path d="M46.9 24.8L52.2 30.8M52.2 24.8L46.9 30.8"/></g><path d="M62.9 22.9h5l3.1 3.3v6.8h-8.1z" fill="#4e4e50"/><path d="M67.7 23v3.4h3.2" fill="#9a9ca0"/><path d="M79 23.3h4l0.6 1.6h5.5v6.9h-10.1z" fill="#4e4e50"/><rect x="79" y="25.4" width="10.1" height="0.5" fill="#cfd3d8"/><path d="M96.2 22.7h9.8v10.3h-9.8z" fill="#4e4e50"/><rect x="98" y="23.6" width="6.2" height="2.8" fill="#cfd3d8"/><rect x="102" y="24" width="1.3" height="2" fill="#4e4e50"/><rect x="98" y="28.2" width="6.2" height="4.8" fill="#cfd3d8"/><rect x="99" y="29" width="4.2" height="4" fill="#4e4e50"/><rect x="99.8" y="29" width="2.6" height="4" fill="#9a9da2"/><text x="113.8" y="30.7" font-size="6.88" fill="#2a2a2a" stroke="#2a2a2a" stroke-width="0.12" textLength="9.99" lengthAdjust="spacingAndGlyphs" >File</text>
<text x="131.7" y="30.7" font-size="6.88" fill="#2a2a2a" stroke="#2a2a2a" stroke-width="0.12" textLength="10.68" lengthAdjust="spacingAndGlyphs" >Edit</text>
<text x="150.1" y="30.7" font-size="6.88" fill="#2a2a2a" stroke="#2a2a2a" stroke-width="0.12" textLength="18.84" lengthAdjust="spacingAndGlyphs" >Effects</text>
<text x="177" y="30.7" font-size="6.88" fill="#2a2a2a" stroke="#2a2a2a" stroke-width="0.12" textLength="16.55" lengthAdjust="spacingAndGlyphs" >Share</text>
<text x="200.5" y="30.7" font-size="6.88" fill="#2a2a2a" stroke="#2a2a2a" stroke-width="0.12" textLength="12.75" lengthAdjust="spacingAndGlyphs" >Help</text>
<rect x="527.3" y="20.3" width="50.4" height="15.4" fill="#b9bcc0" stroke="#d2d5d9" stroke-width="0.6"/><rect x="580.3" y="20.3" width="55.4" height="15.4" fill="#b9bcc0" stroke="#d2d5d9" stroke-width="0.6"/><circle cx="534.7" cy="27.6" r="5" fill="#57595d"/><circle cx="534.7" cy="27.6" r="2.3" fill="none" stroke="#8c8e92" stroke-width="0.8"/><circle cx="534.7" cy="27.6" r="0.7" fill="#9a9ca0"/><text x="548.5" y="30.7" font-size="6.88" fill="#2a2a2a" stroke="#2a2a2a" stroke-width="0.12" textLength="13.10" lengthAdjust="spacingAndGlyphs" >Burn</text>
<path d="M587.7 32.5v-7.3M584.8 28l2.9-3l2.9 3M583.5 34h8.5" stroke="#2a2a2a" stroke-width="1" fill="none"/><text x="600.7" y="30.7" font-size="6.88" fill="#2a2a2a" stroke="#2a2a2a" stroke-width="0.12" textLength="17.92" lengthAdjust="spacingAndGlyphs" >Export</text>
<g fill="none" stroke="#c5c9ce" stroke-width="1"><rect x="331.4" y="43.3" width="3.6" height="3.6" rx="0.6"/><rect x="337.4" y="43.3" width="3.6" height="3.6" rx="0.6"/><rect x="331.4" y="49" width="3.6" height="3.6" rx="0.6"/><rect x="337.4" y="49" width="3.6" height="3.6" rx="0.6"/></g><text x="350.6" y="53.1" font-size="14.6" fill="#c5c9ce" class="serif" stroke="#c5c9ce" stroke-width="0.35">T</text>
<g fill="none" stroke="#c5c9ce" stroke-width="1.1" stroke-linecap="round"><path d="M379.2 43.6C378 42.4 376.4 43.2 375.9 45.2L374.1 51.2C373.4 53.4 371.6 53.8 370.6 52.8"/><path d="M373.6 47.1H377.2"/><path d="M377 47.4C378.2 47.6 378.6 51.2 380.2 51.6"/><path d="M380.4 47.2L377.2 51.8"/></g><g fill="none" stroke="#c5c9ce" stroke-width="1.2"><path d="M390.3 43.4v9l6.5-4.5z"/><path d="M395 43.4a4.5 4.5 0 0 1 0 9"/></g><path d="M412.6 51.3v-6.5l6.2-1.6v6.3" fill="none" stroke="#c5c9ce" stroke-width="1.3"/><ellipse cx="411.5" cy="51.6" rx="1.7" ry="1.3" fill="#c5c9ce"/><ellipse cx="417.7" cy="49.8" rx="1.7" ry="1.3" fill="#c5c9ce"/><g transform="translate(435.6 48.3) rotate(45)"><path d="M-6 -2.5h8.6l2.6 2.5l-2.6 2.5h-8.6z" fill="#c5c9ce" stroke="#c5c9ce" stroke-width="0.4" stroke-linejoin="round"/><circle cx="-4.3" cy="-0.9" r="0.85" fill="#3b3e43"/></g><g fill="none" stroke="#c5c9ce" stroke-width="1.2"><path d="M448.6 48.2h8.2M451.6 45.2l-3 3l3 3"/><path d="M461 48.2h8.4M466.4 45.2l3 3l-3 3"/><path d="M478.7 52v-7.6M475.3 47.8l3.4-3.4l3.4 3.4"/><circle cx="491" cy="48" r="3.4"/><path d="M493.5 50.5l3 2.6"/></g><circle cx="505" cy="48.2" r="3.4" fill="none" stroke="#c5c9ce" stroke-width="2"/><g stroke="#c5c9ce" stroke-width="1.8"><path d="M505 48.2m0 -5.2v1.6" transform="rotate(0 505 48.2)"/><path d="M505 48.2m0 -5.2v1.6" transform="rotate(45 505 48.2)"/><path d="M505 48.2m0 -5.2v1.6" transform="rotate(90 505 48.2)"/><path d="M505 48.2m0 -5.2v1.6" transform="rotate(135 505 48.2)"/><path d="M505 48.2m0 -5.2v1.6" transform="rotate(180 505 48.2)"/><path d="M505 48.2m0 -5.2v1.6" transform="rotate(225 505 48.2)"/><path d="M505 48.2m0 -5.2v1.6" transform="rotate(270 505 48.2)"/><path d="M505 48.2m0 -5.2v1.6" transform="rotate(315 505 48.2)"/></g><rect x="515" y="41" width="95" height="13.3" fill="#1d1f22"/><path d="M602.8 47l2.5 2.3l2.5-2.3" fill="none" stroke="#c5c9ce" stroke-width="1"/><g fill="#85888d"><rect x="627" y="43.2" width="1.7" height="1.8"/><rect x="627" y="46" width="1.7" height="1.8"/><rect x="627" y="48.8" width="1.7" height="1.8"/><rect x="627" y="51.2" width="1.7" height="1.6"/><rect x="629.8" y="43" width="2" height="9.8"/><rect x="629.8" y="43" width="6.2" height="2.2"/><rect x="629.8" y="47" width="5.4" height="2"/></g><path d="M330.4 62.30h4.2l-2.1 1.8z" fill="#74777c"/><text x="339.7" y="65.7" font-size="7.10" fill="#e2e3e5" stroke="#e2e3e5" stroke-width="0.12" textLength="27.74" lengthAdjust="spacingAndGlyphs" >My media</text>
<rect x="328.6" y="71.6" width="5.6" height="4" fill="none" stroke="#eadcea" stroke-width="0.9"/><rect x="327.7" y="75.8" width="7.4" height="1.4" fill="#fff"/><text x="339.7" y="77.6" font-size="7.10" fill="#e2e3e5" stroke="#e2e3e5" stroke-width="0.12" textLength="28.10" lengthAdjust="spacingAndGlyphs" >Computer</text>
<path d="M328.8 81.8h3.4l2 2v5.4h-5.4z" fill="none" stroke="#eadcea" stroke-width="0.9"/><text x="339.7" y="88.6" font-size="7.10" fill="#e2e3e5" stroke="#e2e3e5" stroke-width="0.12" textLength="23.12" lengthAdjust="spacingAndGlyphs" >Projects</text>
<circle cx="331.5" cy="95.2" r="1.7" fill="none" stroke="#f4dcae" stroke-width="0.9"/><path d="M328.6 101.3a2.9 2.6 0 0 1 5.8 0z" fill="none" stroke="#f4dcae" stroke-width="0.9"/><text x="339.7" y="100.6" font-size="7.10" fill="#e2e3e5" stroke="#e2e3e5" stroke-width="0.12" textLength="18.14" lengthAdjust="spacingAndGlyphs" >Admin</text>
<path d="M327.5 111.6l2.5-3.6l1.5 2l1.5-2.4l2.6 4z" fill="none" stroke="#cfe0f4" stroke-width="0.9"/><text x="339.7" y="112.6" font-size="7.10" fill="#e2e3e5" stroke="#e2e3e5" stroke-width="0.12" textLength="32.72" lengthAdjust="spacingAndGlyphs" >My pictures</text>
<rect x="327.8" y="117" width="7.4" height="6.6" fill="none" stroke="#e8b8c4" stroke-width="0.8"/><path d="M331.5 117v6.6M327.8 119.2h7.4M327.8 121.4h7.4" stroke="#e8b8c4" stroke-width="0.6"/><text x="339.7" y="123.6" font-size="7.10" fill="#e2e3e5" stroke="#e2e3e5" stroke-width="0.12" textLength="28.81" lengthAdjust="spacingAndGlyphs" >My videos</text>
<path d="M329.6 135.6v-5.8l4.4-1.2v5.4" fill="none" stroke="#e4f4e8" stroke-width="0.9"/><circle cx="328.7" cy="135.6" r="1.3" fill="#e4f4e8"/><circle cx="333.1" cy="134" r="1.3" fill="#e4f4e8"/><text x="339.7" y="135.6" font-size="7.10" fill="#e2e3e5" stroke="#e2e3e5" stroke-width="0.12" textLength="27.02" lengthAdjust="spacingAndGlyphs" >My music</text>
<path d="M330.4 143.30h4.2l-2.1 1.8z" fill="#74777c"/><text x="339.7" y="146.7" font-size="7.10" fill="#e2e3e5" stroke="#e2e3e5" stroke-width="0.12" textLength="39.84" lengthAdjust="spacingAndGlyphs" >MAGIX media</text>
<circle cx="331.5" cy="155.6" r="3.2" fill="none" stroke="#f0c8d0" stroke-width="0.9"/><path d="M331.5 152.4v2.4" stroke="#f0c8d0" stroke-width="0.9"/><text x="339.7" y="158.6" font-size="7.10" fill="#e2e3e5" stroke="#e2e3e5" stroke-width="0.12" textLength="48.37" lengthAdjust="spacingAndGlyphs" >Animations (.xar)</text>
<path d="M327.8 165h7.4l-1 5h-5.4z M328.4 167.2h6.2" fill="none" stroke="#d8d0f0" stroke-width="0.9"/><text x="339.7" y="170.6" font-size="7.10" fill="#e2e3e5" stroke="#e2e3e5" stroke-width="0.12" textLength="28.46" lengthAdjust="spacingAndGlyphs" >Manage...</text>
<path d="M331.5 174.8v5.4M329.3 178l2.2 2.2l2.2-2.2M328.4 182h6.2" fill="none" stroke="#f4dcae" stroke-width="0.9"/><text x="339.7" y="181.6" font-size="7.10" fill="#e2e3e5" stroke="#e2e3e5" stroke-width="0.12" textLength="31.66" lengthAdjust="spacingAndGlyphs" >Downloads</text>
<path d="M328 192.6a2 2 0 0 1 1-3.2a2.6 2.6 0 0 1 5 0a2 2 0 0 1 1 3.2z" fill="none" stroke="#d8d0f0" stroke-width="0.9"/><text x="339.7" y="193.6" font-size="7.10" fill="#e2e3e5" stroke="#e2e3e5" stroke-width="0.12" textLength="41.62" lengthAdjust="spacingAndGlyphs" >Cloud import...</text>
<path d="M331.5 205.2l-2.6-3.8a2.9 2.9 0 1 1 5.2 0z" fill="none" stroke="#d8d0f0" stroke-width="0.9"/><circle cx="331.5" cy="200.2" r="0.8" fill="#d8d0f0"/><text x="339.7" y="204.6" font-size="7.10" fill="#e2e3e5" stroke="#e2e3e5" stroke-width="0.12" textLength="40.31" lengthAdjust="spacingAndGlyphs" >Travel Maps...</text>
<path d="M329.6 216.6v-5.8l4.4-1.2v5.4" fill="none" stroke="#e4f4e8" stroke-width="0.9"/><circle cx="328.7" cy="216.6" r="1.3" fill="#e4f4e8"/><circle cx="333.1" cy="215" r="1.3" fill="#e4f4e8"/><text x="339.7" y="216.6" font-size="7.10" fill="#e2e3e5" stroke="#e2e3e5" stroke-width="0.12" textLength="47.66" lengthAdjust="spacingAndGlyphs" >Slideshow music</text>
<path d="M330.4 225.30h4.2l-2.1 1.8z" fill="#74777c"/><text x="339.7" y="228.7" font-size="7.10" fill="#e2e3e5" stroke="#e2e3e5" stroke-width="0.12" textLength="61.43" lengthAdjust="spacingAndGlyphs" >MAGIX Sound effects</text>
<path d="M329.6 239.6v-5.8l4.4-1.2v5.4" fill="none" stroke="#e4f4e8" stroke-width="0.9"/><circle cx="328.7" cy="239.6" r="1.3" fill="#e4f4e8"/><circle cx="333.1" cy="238" r="1.3" fill="#e4f4e8"/><text x="339.7" y="239.6" font-size="7.10" fill="#e2e3e5" stroke="#e2e3e5" stroke-width="0.12" textLength="19.21" lengthAdjust="spacingAndGlyphs" >Nature</text>
<path d="M329.6 251.6v-5.8l4.4-1.2v5.4" fill="none" stroke="#e4f4e8" stroke-width="0.9"/><circle cx="328.7" cy="251.6" r="1.3" fill="#e4f4e8"/><circle cx="333.1" cy="250" r="1.3" fill="#e4f4e8"/><text x="339.7" y="251.6" font-size="7.10" fill="#e2e3e5" stroke="#e2e3e5" stroke-width="0.12" textLength="23.48" lengthAdjust="spacingAndGlyphs" >Ambient</text>
<rect x="2" y="238.4" width="322.5" height="2.8" fill="#6f777c"/><rect x="2" y="238.4" width="7" height="2.8" fill="#a9b1b7"/><rect x="318.5" y="238.2" width="6.3" height="3.2" rx="1.4" fill="#b8bec2"/><circle cx="5.6" cy="234.6" r="3.1" fill="#e8eaec"/><rect x="19.3" y="234.7" width="0.9" height="2.6" fill="#a4a8ac"/><rect x="33.3" y="234.7" width="0.9" height="2.6" fill="#a4a8ac"/><rect x="47.3" y="234.7" width="0.9" height="2.6" fill="#a4a8ac"/><rect x="61.3" y="234.7" width="0.9" height="2.6" fill="#a4a8ac"/><rect x="75.3" y="234.7" width="0.9" height="2.6" fill="#a4a8ac"/><rect x="89.3" y="234.7" width="0.9" height="2.6" fill="#a4a8ac"/><rect x="103.3" y="234.7" width="0.9" height="2.6" fill="#a4a8ac"/><rect x="117.3" y="234.7" width="0.9" height="2.6" fill="#a4a8ac"/><rect x="131.3" y="234.7" width="0.9" height="2.6" fill="#a4a8ac"/><rect x="145.3" y="234.7" width="0.9" height="2.6" fill="#a4a8ac"/><rect x="159.3" y="234.7" width="0.9" height="2.6" fill="#a4a8ac"/><rect x="173.3" y="234.7" width="0.9" height="2.6" fill="#a4a8ac"/><rect x="187.3" y="234.7" width="0.9" height="2.6" fill="#a4a8ac"/><rect x="201.3" y="234.7" width="0.9" height="2.6" fill="#a4a8ac"/><rect x="215.3" y="234.7" width="0.9" height="2.6" fill="#a4a8ac"/><rect x="229.3" y="234.7" width="0.9" height="2.6" fill="#a4a8ac"/><rect x="243.3" y="234.7" width="0.9" height="2.6" fill="#a4a8ac"/><rect x="257.3" y="234.7" width="0.9" height="2.6" fill="#a4a8ac"/><rect x="271.3" y="234.7" width="0.9" height="2.6" fill="#a4a8ac"/><rect x="285.3" y="234.7" width="0.9" height="2.6" fill="#a4a8ac"/><rect x="299.3" y="234.7" width="0.9" height="2.6" fill="#a4a8ac"/><rect x="313.3" y="234.7" width="0.9" height="2.6" fill="#a4a8ac"/><rect x="12.3" y="236.2" width="0.9" height="1.1" fill="#8a8e92"/><rect x="26.3" y="236.2" width="0.9" height="1.1" fill="#8a8e92"/><rect x="40.3" y="236.2" width="0.9" height="1.1" fill="#8a8e92"/><rect x="54.3" y="236.2" width="0.9" height="1.1" fill="#8a8e92"/><rect x="68.3" y="236.2" width="0.9" height="1.1" fill="#8a8e92"/><rect x="82.3" y="236.2" width="0.9" height="1.1" fill="#8a8e92"/><rect x="96.3" y="236.2" width="0.9" height="1.1" fill="#8a8e92"/><rect x="110.3" y="236.2" width="0.9" height="1.1" fill="#8a8e92"/><rect x="124.3" y="236.2" width="0.9" height="1.1" fill="#8a8e92"/><rect x="138.3" y="236.2" width="0.9" height="1.1" fill="#8a8e92"/><rect x="152.3" y="236.2" width="0.9" height="1.1" fill="#8a8e92"/><rect x="166.3" y="236.2" width="0.9" height="1.1" fill="#8a8e92"/><rect x="180.3" y="236.2" width="0.9" height="1.1" fill="#8a8e92"/><rect x="194.3" y="236.2" width="0.9" height="1.1" fill="#8a8e92"/><rect x="208.3" y="236.2" width="0.9" height="1.1" fill="#8a8e92"/><rect x="222.3" y="236.2" width="0.9" height="1.1" fill="#8a8e92"/><rect x="236.3" y="236.2" width="0.9" height="1.1" fill="#8a8e92"/><rect x="250.3" y="236.2" width="0.9" height="1.1" fill="#8a8e92"/><rect x="264.3" y="236.2" width="0.9" height="1.1" fill="#8a8e92"/><rect x="278.3" y="236.2" width="0.9" height="1.1" fill="#8a8e92"/><rect x="292.3" y="236.2" width="0.9" height="1.1" fill="#8a8e92"/><rect x="306.3" y="236.2" width="0.9" height="1.1" fill="#8a8e92"/><rect x="320.3" y="236.2" width="0.9" height="1.1" fill="#8a8e92"/><text x="16" y="255.1" font-size="10.4" fill="#c8ccd0" textLength="25.4" lengthAdjust="spacingAndGlyphs">00:00</text><text x="43.2" y="253.3" font-size="6.6" fill="#c8ccd0" textLength="6.6" lengthAdjust="spacingAndGlyphs">00</text><circle cx="106.4" cy="250.5" r="4.4" fill="#e98a94"/><rect x="120.8" y="246.4" width="1.2" height="7.8" fill="#dfe2e5"/><path d="M126.8 246.4v7.8l-4.8-3.9z" fill="#dfe2e5"/><path d="M141 246.4v7.8l-4.8-3.9zM145.8 246.4v7.8l-4.8-3.9z" fill="#dfe2e5"/><rect x="154" y="246.3" width="8.2" height="8.6" fill="#dfe2e5"/><path d="M171 245v11.6l8.7-5.8z" fill="#dfe2e5"/><path d="M187.4 246.4v7.8l4.8-3.9zM192.2 246.4v7.8l4.8-3.9z" fill="#dfe2e5"/><g fill="none" stroke="#dfe2e5" stroke-width="1.1" stroke-linecap="round"><path d="M213.8 245.8C212.6 244.6 211 245.4 210.5 247.4L208.7 253.4C208 255.6 206.2 256 205 255"/><path d="M208.2 249.3H211.8"/><path d="M211.6 249.6C212.8 249.8 213.2 253.4 214.8 253.8"/><path d="M215 249.4L211.8 254"/></g><rect x="294.5" y="245.3" width="10.8" height="10.3" fill="none" stroke="#dfe2e5" stroke-width="1"/><path d="M299.6 248.3h3v3M297.3 249.9v3h3M297.8 252.4l4.4-3.6" fill="none" stroke="#dfe2e5" stroke-width="0.9"/><circle cx="316.9" cy="247" r="0.9" fill="#dfe2e5"/><circle cx="316.9" cy="250.5" r="0.9" fill="#dfe2e5"/><circle cx="316.9" cy="254" r="0.9" fill="#dfe2e5"/><text x="36.5" y="268.8" font-size="6.99" fill="#1e1e1e" stroke="#1e1e1e" stroke-width="0.3" textLength="65.15" lengthAdjust="spacingAndGlyphs" >Slideshow 2018-12-19*</text>
<path d="M137.7 263.9l3.8 3.8M141.5 263.9l-3.8 3.8" stroke="#333" stroke-width="0.8"/><rect x="145.8" y="260" width="12.8" height="11.8" fill="#bcbfc3" stroke="#9c9fa3" stroke-width="0.7"/><rect x="158.6" y="260" width="12.8" height="11.8" fill="#bcbfc3" stroke="#9c9fa3" stroke-width="0.7"/><path d="M149.6 265.8h5M152.1 263.3v5" stroke="#444" stroke-width="0.9"/><path d="M163.2 264.2l1.9 1.7l1.9-1.7" fill="none" stroke="#444" stroke-width="0.8"/><g fill="none" stroke="#4a4c50" stroke-width="1.1"><circle cx="7.6" cy="279.4" r="1.5"/><circle cx="11.8" cy="283.2" r="1.7"/><path d="M11.2 281.3l2.6-6M9.1 280l6.6-2.6"/><path d="M22.2 279.2l2.1 2.1l2.1-2.1M48.4 279.2l2.1 2.1l2.1-2.1"/></g><path d="M34.4 280.2a4 3.4 0 1 1 6.8 3.4" fill="none" stroke="#4a4c50" stroke-width="1.5"/><path d="M32.2 277.4v4.6h4.6z" fill="#4a4c50"/><path d="M66.4 280.2a4 3.4 0 1 0 -6.8 3.4" fill="none" stroke="#a5a8ac" stroke-width="1.5"/><path d="M68.6 277.4v4.6h-4.6z" fill="#a5a8ac"/><path d="M73.4 279.2l2 2l2-2" fill="none" stroke="#a5a8ac" stroke-width="0.9"/><rect x="84" y="277.6" width="6.4" height="7.2" fill="#4a4c50"/><rect x="83.2" y="276.2" width="8" height="1" fill="#4a4c50"/><rect x="85.8" y="275.5" width="2.8" height="0.8" fill="#4a4c50"/><path d="M101.8 276.2h4.2l3.2 3.2v5.6h-7.4z" fill="#4a4c50"/><g fill="#4a4c50"><rect x="98.8" y="276.0" width="0.9" height="0.9"/><rect x="98.8" y="277.8" width="0.9" height="0.9"/><rect x="98.8" y="279.6" width="0.9" height="0.9"/><rect x="98.8" y="281.4" width="0.9" height="0.9"/><rect x="98.8" y="283.2" width="0.9" height="0.9"/><rect x="99.6" y="276" width="1.4" height="0.9"/></g><path d="M116.6 275.8h4.8v6.6h-4.8z" fill="#4a4c50"/><path d="M119.4 278.2h4.2l2.6 2.6v4.2h-6.8z" fill="#4a4c50" stroke="#d3d6da" stroke-width="0.6"/><path d="M134.6 276h4.6v6.6h-4.6z" fill="#b9bcc0"/><path d="M137.2 278.2h3.6l2 2v4.8h-5.6z" fill="#b9bcc0" stroke="#d3d6da" stroke-width="0.5"/><text x="151.2" y="284.6" font-size="14" fill="#45474b" class="serif" stroke="#45474b" stroke-width="0.35">T</text>
<path d="M168.4 285h9v-9.5" fill="none" stroke="#4a4c50" stroke-width="1"/><path d="M169.5 284.5a6 6 0 0 1 5.5-6.2" fill="none" stroke="#4a4c50" stroke-width="1.1"/><path d="M173.6 276.2l2.6 2l-2.6 2z" fill="#4a4c50"/><rect x="182.2" y="273.8" width="16.4" height="12.4" fill="#4aa8c8"/><path d="M187.4 276.2v8.2l2.2-2l1.6 3l1.2-0.6l-1.5-3h3z" fill="#1c2a30"/><g stroke="#4a4c50" stroke-width="0.9"><path d="M202 276.8h5M202 278.6h5M202 280.4h3.4"/></g><path d="M206.2 277.4v8l2-1.8l1.5 2.7l1-0.5l-1.4-2.7h2.7z" fill="#4a4c50"/><g stroke="#4a4c50" stroke-width="0.9" fill="none"><path d="M219.4 276h9.8M219.4 285.2h9.8M222 278.4l2.4 2.4l-2.4 2.4M226.6 278.4v4.8"/></g><rect x="236.8" y="275.8" width="9.6" height="9.4" fill="none" stroke="#4a4c50" stroke-width="1.1"/><rect x="239" y="277.8" width="5.2" height="5.4" fill="none" stroke="#4a4c50" stroke-width="0.8"/><g fill="#4a4c50"><rect x="237.6" y="276.6" width="0.6" height="0.7"/><rect x="245" y="276.6" width="0.6" height="0.7"/><rect x="237.6" y="278.2" width="0.6" height="0.7"/><rect x="245" y="278.2" width="0.6" height="0.7"/><rect x="237.6" y="279.8" width="0.6" height="0.7"/><rect x="245" y="279.8" width="0.6" height="0.7"/><rect x="237.6" y="281.4" width="0.6" height="0.7"/><rect x="245" y="281.4" width="0.6" height="0.7"/><rect x="237.6" y="283.0" width="0.6" height="0.7"/><rect x="245" y="283.0" width="0.6" height="0.7"/></g><g fill="none" stroke="#4a4c50" stroke-width="1"><path d="M256 275.8h-1.4v9.4h1.4M262.6 275.8h1.4v9.4h-1.4"/></g><g fill="#4a4c50"><rect x="257" y="278" width="1.4" height="1.4"/><rect x="260.2" y="278" width="1.4" height="1.4"/><rect x="257" y="281.4" width="1.4" height="1.4"/><rect x="260.2" y="281.4" width="1.4" height="1.4"/></g><rect x="271.1" y="279.1" width="4.3" height="5.7" rx="0.8" fill="#4a4c50"/><rect x="276.6" y="279.1" width="4.3" height="5.7" rx="0.8" fill="#4a4c50"/><path d="M273.3 279.2v-3.4M278.7 279.2v-3.4" stroke="#4a4c50" stroke-width="1"/><rect x="272.8" y="280.6" width="1" height="3" rx="0.5" fill="#e0e2e4"/><rect x="278.2" y="280.6" width="1" height="3" rx="0.5" fill="#e0e2e4"/><g fill="none" stroke="#4a4c50" stroke-width="1.1"><rect x="-2.4" y="-1.5" width="4.8" height="3" rx="1.5" transform="translate(289.6 281.8) rotate(-45)"/><rect x="-2.4" y="-1.5" width="4.8" height="3" rx="1.5" transform="translate(293.4 278.2) rotate(-45)"/></g><g fill="none" stroke="#4a4c50" stroke-width="1.1"><rect x="-2.5" y="-1.5" width="5" height="3" rx="1.5" transform="translate(302.6 279.8) rotate(-35)"/><path d="M305.6 280.8l2.2 2.6a1.2 1.2 0 0 0 1.8 -1.6l-1.6-1.8" transform="rotate(-10 307.5 282)"/></g><circle cx="478.4" cy="280.6" r="4.3" fill="#4a4c50"/><path d="M475.8 280.6h5.2" stroke="#d3d6da" stroke-width="0.9" stroke-dasharray="1 0.6"/><circle cx="492" cy="280.6" r="4.3" fill="#4a4c50"/><path d="M489.6 280.6h4.8" stroke="#d3d6da" stroke-width="1.1"/><rect x="503" y="279.9" width="49.4" height="1.5" fill="#9da0a4"/><circle cx="528" cy="280.6" r="3.9" fill="#45474b"/><circle cx="563" cy="280.6" r="4.3" fill="#4a4c50"/><path d="M560.6 280.6h4.8M563 278.2v4.8" stroke="#d3d6da" stroke-width="1.1"/><g fill="none" stroke="#4a4c50" stroke-width="1"><rect x="573" y="277.8" width="7.8" height="5.4"/><path d="M576.9 275.4v10.4M575.6 276.6l1.3-1.2l1.3 1.2M575.6 284.6l1.3 1.2l1.3-1.2"/></g><rect x="586.2" y="275.8" width="8.4" height="9.2" fill="#4a4c50"/><rect x="587.4" y="277" width="6" height="5.4" fill="#b9bcc0"/><text x="599.5" y="283" font-size="6.99" fill="#2e2e2e" stroke="#2e2e2e" stroke-width="0.12" textLength="30.82" lengthAdjust="spacingAndGlyphs" >Storyboard</text>
<path d="M1.5 290h2.6v6.8h-2.6z" fill="#f4f4f4"/><text x="4.5" y="295.1" font-size="5.88" fill="#222428" stroke="#222428" stroke-width="0.2" textLength="25.05" lengthAdjust="spacingAndGlyphs" >0:00:00:00</text>
<rect x="29.8" y="295.2" width="0.8" height="1.4" fill="#505256"/><rect x="57.6" y="295.2" width="0.8" height="1.4" fill="#505256"/><rect x="85.1" y="293.4" width="0.8" height="3.2" fill="#3a3c40"/><text x="86.4" y="295.1" font-size="5.88" fill="#222428" stroke="#222428" stroke-width="0.2" textLength="28.00" lengthAdjust="spacingAndGlyphs" >00:00:30:00</text>
<rect x="113.4" y="295.2" width="0.8" height="1.4" fill="#505256"/><rect x="141.2" y="295.2" width="0.8" height="1.4" fill="#505256"/><rect x="168.7" y="293.4" width="0.8" height="3.2" fill="#3a3c40"/><text x="170.0" y="295.1" font-size="5.88" fill="#222428" stroke="#222428" stroke-width="0.2" textLength="28.00" lengthAdjust="spacingAndGlyphs" >00:01:00:00</text>
<rect x="197.0" y="295.2" width="0.8" height="1.4" fill="#505256"/><rect x="224.8" y="295.2" width="0.8" height="1.4" fill="#505256"/><rect x="252.3" y="293.4" width="0.8" height="3.2" fill="#3a3c40"/><text x="253.6" y="295.1" font-size="5.88" fill="#222428" stroke="#222428" stroke-width="0.2" textLength="28.00" lengthAdjust="spacingAndGlyphs" >00:01:30:00</text>
<rect x="280.6" y="295.2" width="0.8" height="1.4" fill="#505256"/><rect x="308.4" y="295.2" width="0.8" height="1.4" fill="#505256"/><rect x="335.9" y="293.4" width="0.8" height="3.2" fill="#3a3c40"/><text x="337.2" y="295.1" font-size="5.88" fill="#222428" stroke="#222428" stroke-width="0.2" textLength="28.00" lengthAdjust="spacingAndGlyphs" >00:02:00:00</text>
<rect x="364.2" y="295.2" width="0.8" height="1.4" fill="#505256"/><rect x="392.0" y="295.2" width="0.8" height="1.4" fill="#505256"/><rect x="419.5" y="293.4" width="0.8" height="3.2" fill="#3a3c40"/><text x="420.8" y="295.1" font-size="5.88" fill="#222428" stroke="#222428" stroke-width="0.2" textLength="28.00" lengthAdjust="spacingAndGlyphs" >00:02:30:00</text>
<rect x="447.8" y="295.2" width="0.8" height="1.4" fill="#505256"/><rect x="475.6" y="295.2" width="0.8" height="1.4" fill="#505256"/><rect x="503.1" y="293.4" width="0.8" height="3.2" fill="#3a3c40"/><text x="504.4" y="295.1" font-size="5.88" fill="#222428" stroke="#222428" stroke-width="0.2" textLength="28.00" lengthAdjust="spacingAndGlyphs" >00:03:00:00</text>
<rect x="531.4" y="295.2" width="0.8" height="1.4" fill="#505256"/><rect x="559.2" y="295.2" width="0.8" height="1.4" fill="#505256"/><rect x="586.7" y="293.4" width="0.8" height="3.2" fill="#3a3c40"/><text x="588.0" y="295.1" font-size="5.88" fill="#222428" stroke="#222428" stroke-width="0.2" textLength="28.00" lengthAdjust="spacingAndGlyphs" >00:03:30:00</text>
<rect x="615.0" y="295.2" width="0.8" height="1.4" fill="#505256"/><path d="M629.2 289h3.8v6l-1.4 1.4h-2.4z" fill="#eceef0"/><text x="8.7" y="304.5" font-size="6.44" fill="#0a2848" stroke="#0a2848" stroke-width="0.22" textLength="125.50" lengthAdjust="spacingAndGlyphs" >Dua Lipa - New Rules (Official Music Video).mp4</text>
<rect x="4.3" y="320" width="12" height="6.3" fill="#3a4a50"/><rect x="4.8" y="320.5" width="5.6" height="5.3" fill="#e8901c"/><rect x="10.6" y="320.5" width="5.2" height="5.3" fill="#80b8c8"/><path d="M12 325.4v-3.6h1.6a1 1 0 0 1 0 2h-1.6" fill="none" stroke="#2a5866" stroke-width="0.7"/><path d="M5.8 325.2l1.8-4.2l1.8 4.2M6.6 323.6h2" stroke="#3a2a10" stroke-width="0.6" fill="none"/><rect x="614" y="320.6" width="12" height="6.3" fill="#3a4a50"/><rect x="614.5" y="321.1" width="5.6" height="5.3" fill="#e8901c"/><rect x="620.3" y="321.1" width="5.2" height="5.3" fill="#80b8c8"/><path d="M621.7 326v-3.6h1.6a1 1 0 0 1 0 2h-1.6" fill="none" stroke="#2a5866" stroke-width="0.7"/><path d="M615.5 325.8l1.8-4.2l1.8 4.2M616.3 324.2h2" stroke="#3a2a10" stroke-width="0.6" fill="none"/><path d="M631.6 303.6l2.2-2l2.2 2" fill="none" stroke="#333" stroke-width="0.8"/><rect x="632" y="305" width="4" height="35.5" fill="#6e7175"/><path d="M631.6 380.8l2.2 2l2.2-2" fill="none" stroke="#333" stroke-width="0.8"/><rect x="1" y="385" width="628" height="1" fill="#b5b8bc"/><rect x="1" y="386" width="638" height="7" fill="#808387"/><rect x="1" y="386" width="8.5" height="7" fill="#56595d"/><rect x="9.5" y="386.8" width="2" height="5.4" fill="#4f5256"/><path d="M6.2 387.6l-2.2 1.9l2.2 1.9" fill="none" stroke="#f0f0f0" stroke-width="1"/><rect x="629" y="386" width="10" height="7" fill="#6a6d71"/><path d="M632.8 387.6l2.4 1.9l-2.4 1.9" fill="none" stroke="#f0f0f0" stroke-width="0.9"/><circle cx="6" cy="399" r="3.2" fill="none" stroke="#8a8d91" stroke-width="0.7"/><circle cx="14" cy="399" r="3.4" fill="#9a9da1"/><circle cx="14" cy="399" r="2.4" fill="none" stroke="#8a8d91" stroke-width="0.5"/><text x="33.5" y="400.6" font-size="5.77" fill="#dcdee0" stroke="#dcdee0" stroke-width="0.12" textLength="10.98" lengthAdjust="spacingAndGlyphs" >DVD</text>
<path d="M61.4 397.6l2.2 2l2.2-2" fill="none" stroke="#dcdee0" stroke-width="0.9"/><rect x="75.5" y="398.2" width="52" height="1.2" fill="#9a9da1"/><circle cx="77" cy="398.8" r="1" fill="#58c8d8"/><text x="137.5" y="400.6" font-size="5.77" fill="#dcdee0" stroke="#dcdee0" stroke-width="0.12" textLength="19.08" lengthAdjust="spacingAndGlyphs" >4.70 GB</text>
<text x="172.5" y="400.6" font-size="5.77" fill="#dcdee0" stroke="#dcdee0" stroke-width="0.12" textLength="17.92" lengthAdjust="spacingAndGlyphs" >190 MB</text>
<text x="205" y="400.6" font-size="5.77" fill="#dcdee0" stroke="#dcdee0" stroke-width="0.12" textLength="24.28" lengthAdjust="spacingAndGlyphs" >0h:3m:44s</text>
<text x="245" y="400.6" font-size="5.77" fill="#dcdee0" stroke="#dcdee0" stroke-width="0.12" textLength="21.97" lengthAdjust="spacingAndGlyphs" >Photos: 1</text>
</svg>
</body></html>
